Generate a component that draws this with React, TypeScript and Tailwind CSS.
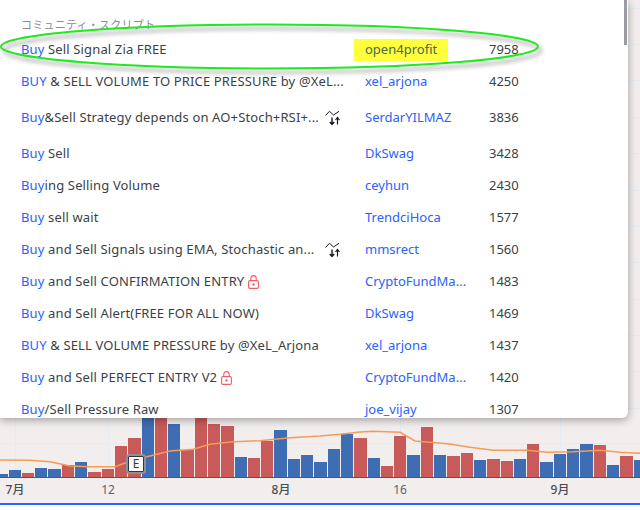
const barData: [number, number, number, string][] = [
    [-1, 9, 3, "b"], [9, 12, 7, "b"], [22, 12, 4, "r"], [35, 12, 9, "b"], [48, 13, 8, "b"],
    [62, 12, 12, "r"], [75, 12, 15, "b"], [88, 13, 5, "r"], [102, 12, 8, "r"], [115, 12, 31, "r"],
    [128, 13, 39, "r"], [142, 12, 60, "b"], [155, 12, 60, "r"], [168, 12, 53, "b"], [181, 13, 27, "r"],
    [195, 12, 60, "r"], [208, 12, 53, "r"], [221, 13, 51, "r"], [235, 12, 20, "b"], [248, 12, 19, "r"],
    [261, 12, 36, "r"], [274, 13, 47, "b"], [288, 12, 18, "b"], [301, 12, 22, "b"], [314, 13, 15, "b"],
    [328, 12, 28, "b"], [341, 12, 43, "b"], [354, 13, 39, "r"], [368, 12, 19, "b"], [381, 12, 11, "r"],
    [394, 12, 41, "r"], [407, 13, 22, "b"], [421, 12, 50, "r"], [434, 12, 22, "b"], [447, 13, 21, "r"],
    [461, 12, 24, "r"], [474, 12, 17, "b"], [487, 13, 18, "r"], [501, 12, 16, "r"], [514, 12, 18, "b"],
    [527, 12, 33, "r"], [540, 13, 15, "b"], [554, 12, 23, "b"], [567, 12, 28, "b"], [580, 13, 33, "b"],
    [594, 12, 32, "r"], [607, 12, 12, "b"], [620, 13, 21, "r"], [634, 8, 17, "b"],
];

const avgLine =
    "0,460 30,460.3 50,461.7 70,466 90,466.7 115,466.7 125,463 147,456.7 170,451 193,449.3 210,444.3 230,442 260,440.7 290,437.7 320,436 340,434.3 360,432 373,431.3 400,432.3 415,441 450,444 470,447.3 493,450.3 527,450.3 547,452.3 573,451.7 600,450.3 620,452.3 640,453.3";

const gridY = [8, 44, 80, 117, 153, 190, 226, 262, 299, 335, 371, 408, 443];
const gridX = [15, 108, 281, 400, 560];

const ticks: [number, string, boolean][] = [
    [15, "7月", true],
    [108, "12", false],
    [281, "8月", true],
    [400, "16", false],
    [560, "9月", true],
];

type Row = {
    match: string;
    rest: string;
    author: string;
    count: number;
    height: number;
    pair?: boolean;
    lock?: boolean;
    marked?: boolean;
};

const rows: Row[] = [
    { match: "Buy", rest: " Sell Signal Zia FREE", author: "open4profit", count: 7958, height: 32, marked: true },
    { match: "BUY", rest: " & SELL VOLUME TO PRICE PRESSURE by @XeL...", author: "xel_arjona", count: 4250, height: 32 },
    { match: "Buy", rest: "&Sell Strategy depends on AO+Stoch+RSI+...", author: "SerdarYILMAZ", count: 3836, height: 40, pair: true },
    { match: "Buy", rest: " Sell", author: "DkSwag", count: 3428, height: 32 },
    { match: "Buy", rest: "ing Selling Volume", author: "ceyhun", count: 2430, height: 32 },
    { match: "Buy", rest: " sell wait", author: "TrendciHoca", count: 1577, height: 32 },
    { match: "Buy", rest: " and Sell Signals using EMA, Stochastic an...", author: "mmsrect", count: 1560, height: 32, pair: true },
    { match: "Buy", rest: " and Sell CONFIRMATION ENTRY", author: "CryptoFundMa...", count: 1483, height: 32, lock: true },
    { match: "Buy", rest: " and Sell Alert(FREE FOR ALL NOW)", author: "DkSwag", count: 1469, height: 32 },
    { match: "BUY", rest: " & SELL VOLUME PRESSURE by @XeL_Arjona", author: "xel_arjona", count: 1437, height: 32 },
    { match: "Buy", rest: " and Sell PERFECT ENTRY V2", author: "CryptoFundMa...", count: 1420, height: 32, lock: true },
    { match: "Buy", rest: "/Sell Pressure Raw", author: "joe_vijay", count: 1307, height: 32 },
];

const PairIcon = () => (
    <svg width="16" height="15" viewBox="0 0 16 15" fill="none" stroke="#131722" className="absolute left-[304px] top-1/2 -translate-y-1/2">
        <path d="M0.5 5 L4.5 0.8 L8.5 4.5 L14 0.8" />
        <path d="M7 7 V14 M4.8 11.5 L7 14 L9.2 11.5" strokeWidth="1.4" />
        <path d="M12.5 14 V7 M10.5 9.5 L12.5 7 L14.5 9.5" strokeWidth="1.2" />
    </svg>
);

const LockIcon = () => (
    <svg width="11" height="14" viewBox="0 0 11 14" fill="none" stroke="#ef5f66" strokeWidth="1.1" className="ml-[4px] shrink-0">
        <rect x="0.6" y="5.6" width="9.8" height="7.8" rx="1.4" />
        <path d="M2.8 5.6 V3.4 C2.8 1.8 4 0.6 5.5 0.6 C7 0.6 8.2 1.8 8.2 3.4 V5.6" />
        <circle cx="5.5" cy="9.4" r="1.2" fill="#ef5f66" stroke="none" />
    </svg>
);

const App = () => {
    return (
        <div className="relative flex h-[510px] w-[640px] flex-col overflow-hidden bg-white font-['Noto_Sans',sans-serif]">
            <svg width="640" height="503" viewBox="0 0 640 503" className="block bg-[#f2eeee]">
                {gridY.map((y) => (
                    <line key={y} x1="0" x2="640" y1={y + 0.5} y2={y + 0.5} stroke="#e4ebf2" />
                ))}
                {gridX.map((x) => (
                    <line key={x} x1={x + 0.5} x2={x + 0.5} y1="0" y2="477" stroke="#e4ebf2" />
                ))}
                {barData.map(([x, w, h, c]) => (
                    <rect key={x} x={x} y={477 - h} width={w} height={h} fill={c === "r" ? "#c95a5a" : "#3f6db3"} />
                ))}
                <polyline points={avgLine} fill="none" stroke="#f79a55" strokeWidth="1.5" />
                <line x1="0" x2="640" y1="477.5" y2="477.5" stroke="#55565e" />
                {ticks.map(([x, label, strong]) => (
                    <text
                        key={label}
                        x={x}
                        y="494"
                        textAnchor="middle"
                        fontSize="12"
                        fontWeight={strong ? 500 : 400}
                        fill={strong ? "#4a4c55" : "#5f616a"}
                        fontFamily="'Noto Sans','Noto Sans CJK JP',sans-serif"
                    >
                        {label}
                    </text>
                ))}
            </svg>
            <div className="h-[2px] bg-[#2962ff]"></div>

            {/* earnings marker on the chart */}
            <div className="absolute left-[126px] top-[454px] flex h-[20px] w-[20px] items-center justify-center rounded-[3px] border-2 border-[#8f9096] bg-white text-[12px] leading-none text-[#333640] shadow-[inset_0_0_0_1px_#33363f]">
                E
            </div>

            {/* search popup */}
            <div className="absolute left-0 top-0 h-[418px] w-[628px] overflow-hidden rounded-br-[6px] bg-white shadow-[0_2px_8px_rgba(0,0,0,0.35)]">
                <div className="h-[33px] pl-[21px] pt-[16px] font-['Noto_Sans_CJK_JP',sans-serif] text-[11px] leading-[16px] tracking-[0.25px] text-[#8a8c93]">
                    コミュニティ・スクリプト
                </div>
                {rows.map((row) => (
                    <div
                        key={row.match + row.rest}
                        className="flex items-center pl-[21px] pt-[2px] text-[13px] text-[#3c3f48]"
                        style={{ height: row.height }}
                    >
                        <div className="relative flex h-full w-[344px] shrink-0 items-center whitespace-pre tracking-[0.14px]">
                            <span className="text-[#2962ff]">{row.match}</span>
                            <span>{row.rest}</span>
                            {row.lock && <LockIcon />}
                            {row.pair && <PairIcon />}
                        </div>
                        {row.marked ? (
                            <div className="-ml-[11px] flex h-[22px] w-[135px] shrink-0 items-center">
                                <span className="flex h-[22px] w-[94px] items-center bg-[#ffff3c] pl-[11px] text-[#4a6a52]">{row.author}</span>
                            </div>
                        ) : (
                            <div className="w-[124px] shrink-0 text-[#2962ff]">{row.author}</div>
                        )}
                        <div>{row.count}</div>
                    </div>
                ))}
                <div className="absolute right-[1px] top-0 h-[45px] w-[3px] bg-[#9b9ca1]"></div>
            </div>

            {/* hand drawn annotation */}
            <svg width="640" height="100" viewBox="0 0 640 100" fill="none" className="absolute left-0 top-0 drop-shadow-[3px_4px_2px_rgba(0,0,0,0.4)]">
                <ellipse cx="269.5" cy="46.5" rx="268.5" ry="22" stroke="#1eea1e" strokeWidth="2" />
            </svg>
        </div>
    );
};

export default App;
